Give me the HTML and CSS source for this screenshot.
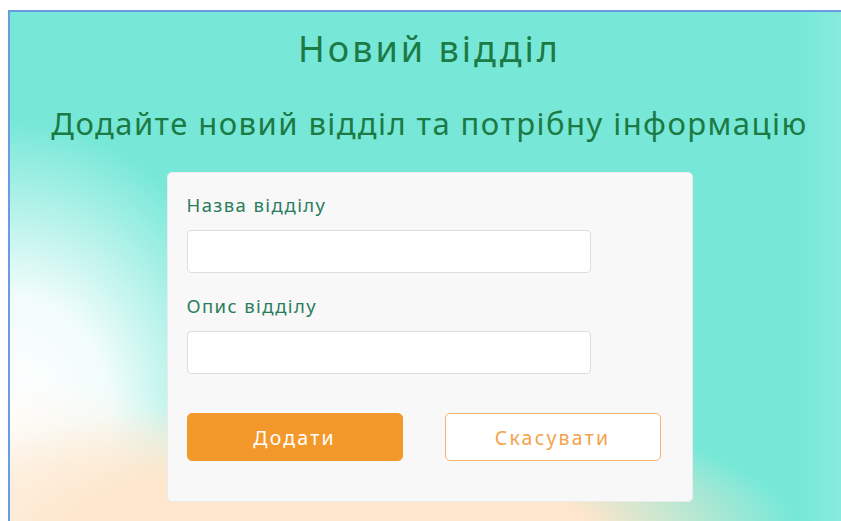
FILE: index.html
```html
<!DOCTYPE html>
<html lang="uk">
<head>
<meta charset="utf-8">
<title>Новий відділ</title>
<link rel="stylesheet" href="styles.css">
</head>
<body>
<main class="frame">
  <h1 class="title">Новий відділ</h1>
  <h2 class="subtitle">Додайте новий відділ та потрібну інформацію</h2>
  <form class="card">
    <label class="field-label" for="dept-name">Назва відділу</label>
    <input class="field-input" id="dept-name" type="text">
    <label class="field-label field-label--second" for="dept-desc">Опис відділу</label>
    <input class="field-input" id="dept-desc" type="text">
    <div class="actions">
      <button class="btn btn--primary" type="submit">Додати</button>
      <button class="btn btn--ghost" type="button">Скасувати</button>
    </div>
  </form>
</main>
</body>
</html>
```

FILE: styles.css
```css
html, body {
  margin: 0;
  padding: 0;
  background: #ffffff;
  overflow: hidden;
}

body {
  font-family: "Noto Sans", "DejaVu Sans", sans-serif;
}

/* page frame with the soft teal / peach backdrop */
.frame {
  box-sizing: border-box;
  margin: 10px 0 0 8px;
  width: 833px;
  height: 511px;
  border-top: 2px solid #6b9ce2;
  border-left: 2px solid #6b9ce2;
  display: flex;
  flex-direction: column;
  align-items: center;
  padding: 15px 0 0 8px;
  overflow: hidden;
  background:
    radial-gradient(ellipse 460px 140px at 330px 525px,
      rgba(253, 230, 203, 1) 0%,
      rgba(253, 230, 203, 1) 55%,
      rgba(253, 230, 203, 0) 100%),
    radial-gradient(ellipse 210px 150px at 50px 520px,
      rgba(254, 243, 230, 1) 0%,
      rgba(254, 243, 230, 0.85) 45%,
      rgba(254, 243, 230, 0) 100%),
    radial-gradient(ellipse 250px 290px at 0px 400px,
      rgba(255, 255, 255, 1) 0%,
      rgba(255, 255, 255, 0.9) 40%,
      rgba(255, 255, 255, 0) 100%),
    linear-gradient(to right, rgba(255, 255, 255, 0) 95%, rgba(255, 255, 255, 0.12) 100%),
    #77e8d8;
}

.title {
  margin: 0;
  font-size: 36px;
  line-height: 44px;
  font-weight: 400;
  letter-spacing: 3px;
  color: #1c7a45;
}

.subtitle {
  margin: 32px 0 0;
  font-size: 31px;
  line-height: 40px;
  font-weight: 400;
  letter-spacing: 1.45px;
  color: #1c7a45;
}

.card {
  box-sizing: border-box;
  width: 526px;
  height: 330px;
  margin-top: 29px;
  padding: 20px 19px 0;
  background: #f8f8f8;
  border: 1px solid #ebebeb;
  border-radius: 5px;
  display: flex;
  flex-direction: column;
  align-items: flex-start;
}

.field-label {
  font-size: 18.5px;
  line-height: 24px;
  letter-spacing: 1.4px;
  color: #2a7d5c;
}

.field-label--second {
  margin-top: 21px;
}

.field-input {
  box-sizing: border-box;
  width: 404px;
  height: 43px;
  margin-top: 13px;
  border: 1px solid #dcdde0;
  border-radius: 4px;
  background: #ffffff;
  font: inherit;
  outline: none;
}

.actions {
  display: flex;
  gap: 42px;
  margin-top: 39px;
}

.btn {
  box-sizing: border-box;
  width: 216px;
  height: 48px;
  border-radius: 5px;
  font-family: inherit;
  font-size: 19.5px;
  letter-spacing: 2.2px;
  cursor: pointer;
}

.btn--primary {
  background: #f3992b;
  border: 1px solid #f3992b;
  color: #ffffff;
}

.btn--ghost {
  background: #ffffff;
  border: 1px solid #f5b46e;
  color: #f4a24c;
}
```
